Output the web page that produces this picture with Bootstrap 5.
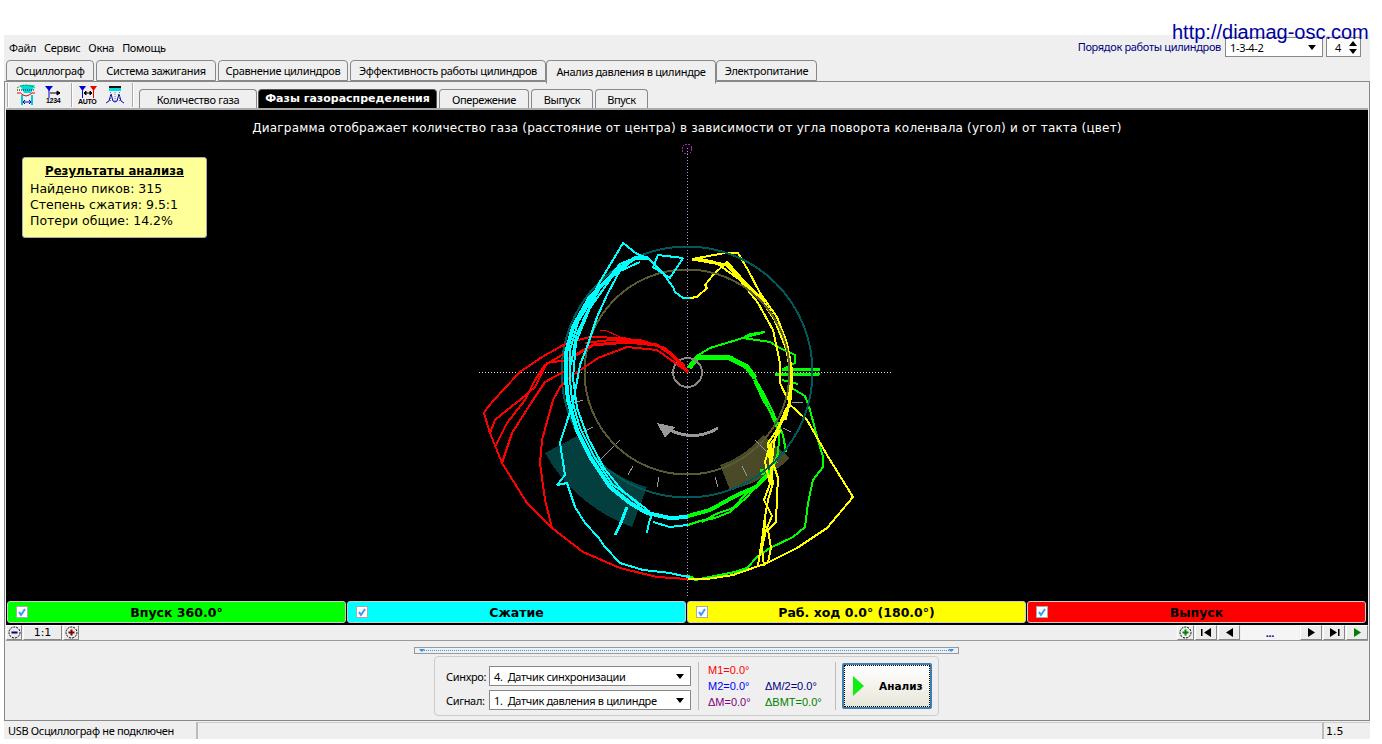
<!DOCTYPE html>
<html lang="ru">
<head>
<meta charset="UTF-8">
<title>Анализ давления в цилиндре</title>
<link rel="stylesheet" href="https://cdn.jsdelivr.net/npm/bootstrap@5.3.0/dist/css/bootstrap.min.css">
<style>
body { background: #fff; font-family: "Noto Sans", "Liberation Sans", sans-serif; font-size: 11px; line-height: 1; letter-spacing: -.33px; color: #000; overflow: hidden; }
.site-url { position: absolute; left: 1172px; top: 21px; font: 20px "Liberation Sans", sans-serif; letter-spacing: 0; color: #0000a0; z-index: 5; }
.app-win { width: 1366px; margin: 35px 0 0 4px; background: #efefef; }
.menu-row { height: 25px; padding: 2px 0 0 5px; }
.menu-items { gap: 8px; padding-top: 5px; }
.order-label { color: #000080; padding-top: 4px; margin-right: 4px; }
.combo { height: 20px; background: #fff; border: 1px solid #888; padding: 0 6px 0 4px; }
.combo-arrow { width: 0; height: 0; border: 4px solid transparent; border-top: 5px solid #000; border-bottom: 0; }
.combo-order { width: 98px; }
.spin-box { width: 35px; height: 20px; margin-left: 3px; margin-right: 9px; background: #fff; border: 1px solid #888; padding: 0 3px 0 8px; }
.spin-up, .spin-down { width: 0; height: 0; border: 4px solid transparent; }
.spin-up { border-bottom: 5px solid #000; border-top: 0; }
.spin-down { border-top: 5px solid #000; border-bottom: 0; margin-top: 3px; }
.top-tabs, .sub-tabs { border: 0; flex-wrap: nowrap; }
.top-tabs { height: 21px; padding-left: 2px; gap: 2px; position: relative; z-index: 2; }
.top-tabs .nav-link, .sub-tabs .nav-link { height: 21px; padding: 0; margin: 0; line-height: 20px; text-align: center; color: #000; background: #efefef; border: 1px solid #888; border-radius: 4px 4px 0 0; }
.top-tabs .nav-link.active { height: 24px; margin-top: -2px; line-height: 22px; background: #efefef; border-color: #888 #888 #efefef; }
.tw-1 { width: 88px; } .tw-2 { width: 120px; } .tw-3 { width: 130px; } .tw-4 { width: 196px; } .tw-5 { width: 170px; margin: 0 -2px !important; } .tw-6 { width: 101px; }
.main-box { height: 640px; border: 1px solid #888; }
.tool-row { height: 28px; border-bottom: 2px solid #aaa; padding-left: 1px; margin: 0 1px; }
.tool-sep { width: 1px; height: 24px; margin-top: 1px; background: #aaa; border-right: 1px solid #fff; box-sizing: content-box; }
.tool-icon { display: block; margin-top: 2px; }
.tg-5 { margin-left: 5px; } .tg-7 { margin-left: 7px; } .tg-8 { margin-left: 8px; } .tg-9 { margin-left: 9px; }
.sub-tabs { gap: 2px; height: 18px; margin-top: 7px; margin-left: 5px; }
.sub-tabs .nav-link { height: 19px; line-height: 19px; border-bottom: 0; }
.sub-tabs .nav-link.active { background: #000; color: #fff; font: bold 11px "DejaVu Sans", sans-serif; letter-spacing: 0; line-height: 18px; border-color: #555; }
.st-1 { width: 118px; } .st-2 { width: 179px; margin-left: -1px !important; } .st-3 { width: 90px; } .st-4 { width: 62px; } .st-5 { width: 53px; }
.chart-area { height: 491px; margin: 0 1px; background: #000; position: relative; overflow: hidden; }
.chart-svg { position: absolute; left: 0; top: 0; shape-rendering: crispEdges; }
.chart-title { position: absolute; left: 0; right: 0; top: 11px; margin: 0; text-align: center; color: #fff; font: 12px "DejaVu Sans", sans-serif; letter-spacing: .19px; }
.result-box { position: absolute; left: 16px; top: 47px; width: 185px; height: 81px; background: #ffff99; border: 1px solid #aaa; border-radius: 3px; padding: 5px 7px; font: 12.5px/16px "DejaVu Sans", sans-serif; letter-spacing: 0; }
.result-head { font-weight: bold; text-decoration: underline; text-align: center; font-size: 11.75px; margin-bottom: 2px; }
.legend-row { height: 24px; margin: 0 1px; background: #000; padding: 0 1px 2px; gap: 1px; }
.legend-item { width: 339px; height: 22px; border: 1px solid #ccc; border-radius: 3px; font: bold 12.5px "DejaVu Sans", sans-serif; letter-spacing: 0; position: relative; padding-top: 3px; text-align: center; }
.leg-green { background: #00ff00; } .leg-cyan { background: #00ffff; } .leg-yellow { background: #ffff00; } .leg-red { background: #ff0000; }
.leg-check { position: absolute; left: 8px; top: 4px; width: 12px; height: 12px; background: #fff; border: 1px solid #aaa; }
.scroll-row { height: 15px; margin: 0 1px; border-bottom: 1px solid #999; box-sizing: content-box; }
.win-btn { height: 15px; background: #ececec; border: 1px solid; border-color: #fff #888 #888 #fff; text-align: center; display: flex; align-items: center; justify-content: center; }
.wb-s { width: 16px; } .wb-p { width: 17px; } .wb-m { width: 22px; margin-left: 1px; } .wb-z { width: 39px; margin: 0 1px; font: 11px "DejaVu Sans", sans-serif; letter-spacing: 0; }
.wb-dots { width: 58px; margin-left: 1px; background: #f5f5f5; border: 0; color: #000080; font-weight: bold; }
.bottom-area { height: 79px; padding: 6px 1px 0 0; }
.split-bar { width: 545px; height: 7px; border: 1px solid #999; margin-bottom: 2px; position: relative; }
.split-line { border-top: 1px dotted #3399ee; margin: 2px 5px 0; }
.split-tri { position: absolute; top: 1px; width: 0; height: 0; border: 3px solid transparent; border-top: 3px solid #3399ee; border-bottom: 0; }
.tri-l { left: 4px; } .tri-r { right: 4px; }
.ctl-panel { width: 505px; height: 60px; border: 1px solid #ccc; border-radius: 4px; padding-left: 11px; }
.ctl-label { width: 43px; }
.ctl-combo { width: 202px; }
.ctl-rows { gap: 4px; margin-top: 4px; }
.ctl-sep { width: 1px; height: 48px; background: #bbb; margin: 0 9px 0 7px; }
.ctl-sep-b { margin: 0 6px 0 0; }
.m-grid { display: grid; grid-template-columns: 57px 70px; grid-auto-rows: 16px; font-family: "Liberation Sans", sans-serif; letter-spacing: 0; width: 127px; margin-top: 6px; }
.m-red { color: #ff0000; } .m-blue { color: #0000ff; } .m-purple { color: #800080; } .m-navy { color: #000080; } .m-green { color: #008000; }
.run-btn { width: 90px; height: 46px; padding: 0 0 0 9px; border-radius: 2px; border: 2px solid #3c7fb1; outline: 1px dotted #000; outline-offset: -3px; background: linear-gradient(#fff, #e8e6da); font: bold 10.5px "DejaVu Sans", sans-serif; letter-spacing: 0; color: #000; gap: 14px; }
.status-row { height: 17px; margin-top: 1px; }
.st-cell { padding: 3px 0 0 4px; height: 17px; }
.st-a { width: 189px; } .st-b { width: 1126px; margin-left: 3px; border-left: 2px solid #bbb; border-top: 1px solid #ccc; } .st-c { width: 48px; border-left: 2px solid #bbb; border-top: 1px solid #ccc; font-family: "DejaVu Sans", sans-serif; letter-spacing: 0; padding-left: 2px; }
</style>
</head>
<body>
<div class="site-url">http://diamag-osc.com</div>
<div class="app-win">
  <div class="menu-row d-flex justify-content-between">
    <div class="menu-items d-flex">
      <span>Файл</span><span>Сервис</span><span>Окна</span><span>Помощь</span>
    </div>
    <div class="d-flex">
      <span class="order-label">Порядок работы цилиндров</span>
      <div class="combo combo-order d-flex align-items-center justify-content-between"><span>1-3-4-2</span><span class="combo-arrow"></span></div>
      <div class="spin-box d-flex align-items-center justify-content-between"><span>4</span><span class="d-flex flex-column"><span class="spin-up"></span><span class="spin-down"></span></span></div>
    </div>
  </div>

  <ul class="nav nav-tabs top-tabs">
    <li class="nav-item"><a class="nav-link tw-1" href="#">Осциллограф</a></li>
    <li class="nav-item"><a class="nav-link tw-2" href="#">Система зажигания</a></li>
    <li class="nav-item"><a class="nav-link tw-3" href="#">Сравнение цилиндров</a></li>
    <li class="nav-item"><a class="nav-link tw-4" href="#">Эффективность работы цилиндров</a></li>
    <li class="nav-item"><a class="nav-link tw-5 active" href="#">Анализ давления в цилиндре</a></li>
    <li class="nav-item"><a class="nav-link tw-6" href="#">Электропитание</a></li>
  </ul>

  <div class="main-box">
    <div class="tool-row d-flex">
      <div class="tool-sep"></div>
      <svg class="tool-icon tg-7" width="20" height="23" viewBox="0 0 20 23">
        <path d="M4 1h15l-4 8H8z" fill="#00dddd"/>
        <path d="M1 4q9-6 18 0" fill="none" stroke="#009900" stroke-dasharray="2 1"/>
        <path d="M1 9q4-1 6 2 3 2 6 0 3-3 6-2" fill="none" stroke="#ee0000"/>
        <path d="M1 6h18" stroke="#000" stroke-dasharray="1 1"/>
        <path d="M6 11v10M16 11v10" stroke="#00cccc" stroke-width="2"/>
        <path d="M7 18h8M7 18l2-2M7 18l2 2M15 18l-2-2M15 18l-2 2" stroke="#0000cc" fill="none"/>
      </svg>
      <svg class="tool-icon tg-9" width="17" height="23" viewBox="0 0 17 23">
        <path d="M0 2h8L4 7z" fill="#0000dd"/>
        <path d="M4 5v9" stroke="#0000dd"/>
        <path d="M5 9h10M15 9l-3-2v4z" stroke="#000" fill="#000"/>
        <text x="1" y="19" font-size="7" font-weight="bold" font-family="Liberation Sans">1234</text>
      </svg>
      <div class="tool-sep tg-9"></div>
      <svg class="tool-icon tg-5" width="20" height="23" viewBox="0 0 20 23">
        <path d="M1 2h7L4.500 7z" fill="#0000dd"/>
        <path d="M12 2h7l-3.500 5z" fill="#ee0000"/>
        <path d="M4.500 5v9" stroke="#0000dd"/><path d="M15.500 5v9" stroke="#ee0000"/>
        <path d="M6 9h8M6 9l2-2v4zM14 9l-2-2v4z" stroke="#000" fill="#000"/>
        <text x="0" y="20" font-size="7" font-weight="bold" font-family="Liberation Sans">AUTO</text>
      </svg>
      <svg class="tool-icon tg-8" width="18" height="23" viewBox="0 0 18 23">
        <path d="M3 2h12v2H3z" fill="#111"/><path d="M3 4h12v3H3z" fill="#00dddd"/>
        <path d="M0 19l3-2 2-7 2 7 2 1 2-1 2-7 2 7 3 2" fill="none" stroke="#0000cc"/>
        <path d="M4.500 8v10M9 8v10M13.500 8v10" stroke="#777" stroke-dasharray="1 1"/>
      </svg>
      <div class="tool-sep tg-8"></div>
      <ul class="nav nav-tabs sub-tabs">
        <li class="nav-item"><a class="nav-link st-1" href="#">Количество газа</a></li>
        <li class="nav-item"><a class="nav-link st-2 active" href="#">Фазы газораспределения</a></li>
        <li class="nav-item"><a class="nav-link st-3" href="#">Опережение</a></li>
        <li class="nav-item"><a class="nav-link st-4" href="#">Выпуск</a></li>
        <li class="nav-item"><a class="nav-link st-5" href="#">Впуск</a></li>
      </ul>
    </div>

    <div class="chart-area">
      <svg class="chart-svg" width="1362" height="491" viewBox="6 110 1362 491" fill="none" stroke-linejoin="bevel">
        <!-- sectors -->
        <path d="M545 453A164 164 0 0 0 632 527L647 487A124 124 0 0 1 577 436Z" fill="#043f3f"/>
        <path d="M763 435A98 98 0 0 1 720 465L730 490A128 128 0 0 0 790 458Z" fill="#4a4a28"/>
        <!-- axes -->
        <path d="M479 372.500H893" stroke="#ddd" stroke-dasharray="1 2"/>
        <path d="M687.500 148V598" stroke="#aaa0dd" stroke-dasharray="1 2"/>
        <circle cx="687" cy="149" r="5" stroke="#aa22aa" stroke-dasharray="2 1"/>
        <!-- ticks -->
        <path d="M573 403L583 400M583 432L593 427M598 462L620 440M628 475L633 466M657 487L659 477M715 477L718 487M742 466L747 476M755 440L778 463M783 428L791 432M792 402L803 403" stroke="#999"/>
        <!-- green -->
        <g stroke="#00ff00" stroke-width="2">
          <polyline stroke-width="5" points="689,368 697,358 710,357 730,358 747,367 755,378"/>
          <polyline points="755,378 768,407 778,430"/>
          <polyline points="758,383 772,410 783,435 786,452"/>
          <polyline points="754,380 763,400 780,427 778,453 770,477"/>
          <polyline stroke-width="4" points="772,470 756,487 737,495 710,510 688,516"/>
          <polyline points="770,470 747,497 730,512 715,518 700,521 688,525"/>
          <polyline points="764,480 745,495 733,508 716,514 702,522"/>
          <polyline points="695,357 710,348 743,338 765,332 750,334 743,338 770,342 780,348 795,355 795,363 782,370"/>
          <polyline stroke-width="3" points="782,369 820,370"/>
          <polyline stroke-width="3" points="775,375 820,374"/>
          <polyline points="782,380 798,384"/>
          <polyline points="790,387 805,396 810,410 818,440 823,457 823,467 813,480 808,503 805,527 793,537 770,548 757,557 747,568 735,572 695,580 692,577 687,576"/>
          <polyline stroke-width="3" points="760,470 765,470 762,475"/>
        </g>
        <!-- yellow -->
        <g stroke="#ffff00" stroke-width="2">
          <polyline stroke-width="3" points="692,259 727,265 745,283 760,297 775,320 787,350 792,380 790,400 785,420"/>
          <polyline points="692,259 725,253 738,253 748,270 760,293 777,317 787,343 792,370 788,400"/>
          <polyline points="696,258 715,262 740,280 758,303 773,330 780,363 780,383 788,400"/>
          <polyline points="690,298 697,297 707,288 705,285 713,275 727,262 740,276 755,300"/>
          <polyline points="788,403 807,420 827,455 853,497 827,528 797,548 767,563 733,575 707,579 687,579"/>
          <polyline points="787,407 777,430 768,443 770,463 773,483 768,500 765,517 762,540 758,565"/>
          <polyline points="785,415 775,437 772,460 778,478 777,497 776,522 768,530 771,548 768,562"/>
          <polyline points="781,430 770,445 765,462 770,484 764,500 772,516 766,530 762,548 764,566"/>
          <polyline stroke-width="3" points="770,445 772,465 770,485"/>
          <polyline stroke-width="3" points="765,520 762,545"/>
        </g>
        <!-- rings -->
        <circle cx="687" cy="372" r="125.500" stroke="#005a5a" stroke-width="2"/>
        <circle cx="687" cy="372" r="102.500" stroke="#5a5a32" stroke-width="2"/>
        <circle cx="687.500" cy="372.500" r="14.500" stroke="#888" stroke-width="2"/>
        <!-- arrow -->
        <path d="M718 428Q695 442 670 430" stroke="#999" stroke-width="3"/>
        <path d="M657 423L675 427L665 438Z" fill="#999"/>
        <!-- red -->
        <g stroke="#ff0000" stroke-width="2">
          <polyline points="688,372 670,352 650,343 623,338 590,337 567,343 542,357 520,372 503,390 487,408 484,413 490,433 502,463 527,503 552,528 583,552 620,568 657,577 688,579"/>
          <polyline stroke-width="3" points="688,372 672,355 657,345 627,342 593,345 567,360"/>
          <polyline points="685,366 665,348 640,340 610,340 585,343"/>
          <polyline points="567,360 547,363 535,387 520,400 507,410 495,420 490,433"/>
          <polyline points="567,352 545,365 535,380 525,400 507,423 495,447"/>
          <polyline points="567,370 545,382 533,400 512,433 502,463"/>
          <polyline points="688,372 657,350 627,347 598,358 570,377 560,387 553,400 542,440 540,463 545,500 552,528"/>
          <polyline stroke-width="1" points="600,330 605,330 620,337"/>
        </g>
        <!-- cyan -->
        <g stroke="#00ffff" stroke-width="2">
          <polyline points="690,298 683,298 675,292 673,287 662,272 648,258 637,254 623,243 613,260 602,278 590,300"/>
          <polyline points="683,258 670,278 653,267 658,255 683,258"/>
          <polyline stroke-width="4" points="648,258 635,258 617,270 590,297 573,327 566,353 566,380 568,400 577,430 590,457 610,487 630,503 647,513 670,518 688,517"/>
          <polyline points="637,257 620,264 595,294 578,322 570,350 570,380 572,400 580,428 594,456 612,484 632,498 650,512"/>
          <polyline points="632,261 612,277 590,308 576,342 573,378 577,408 588,438 604,468 620,488 640,506"/>
          <polyline points="640,262 618,272 600,288 588,310 576,336 571,365"/>
          <polyline points="623,265 608,293 597,317 587,347 580,365 573,403 568,418 560,443 565,475 557,485 567,483 575,507 585,523 598,537 605,547 620,563 643,570 670,573 683,576 690,577"/>
          <polyline stroke-width="3" points="615,535 620,525 627,507"/>
          <polyline points="647,533 649,522 652,515"/>
          <polyline points="653,522 670,527 688,525"/>
        </g>
      </svg>
      <p class="chart-title">Диаграмма отображает количество газа (расстояние от центра) в зависимости от угла поворота коленвала (угол) и от такта (цвет)</p>
      <div class="result-box">
        <div class="result-head">Результаты анализа</div>
        <div>Найдено пиков: 315</div>
        <div>Степень сжатия: 9.5:1</div>
        <div>Потери общие: 14.2%</div>
      </div>
    </div>

    <div class="legend-row d-flex align-items-center">
      <div class="legend-item leg-green"><span class="leg-check"><svg width="10" height="10" viewBox="0 0 10 10" class="d-block"><path d="M2 5l2 3 4-6" fill="none" stroke="#3b99fc" stroke-width="2"/></svg></span>Впуск 360.0°</div>
      <div class="legend-item leg-cyan"><span class="leg-check"><svg width="10" height="10" viewBox="0 0 10 10" class="d-block"><path d="M2 5l2 3 4-6" fill="none" stroke="#3b99fc" stroke-width="2"/></svg></span>Сжатие</div>
      <div class="legend-item leg-yellow"><span class="leg-check"><svg width="10" height="10" viewBox="0 0 10 10" class="d-block"><path d="M2 5l2 3 4-6" fill="none" stroke="#3b99fc" stroke-width="2"/></svg></span>Раб. ход 0.0° (180.0°)</div>
      <div class="legend-item leg-red"><span class="leg-check"><svg width="10" height="10" viewBox="0 0 10 10" class="d-block"><path d="M2 5l2 3 4-6" fill="none" stroke="#3b99fc" stroke-width="2"/></svg></span>Выпуск</div>
    </div>

    <div class="scroll-row d-flex">
      <div class="win-btn wb-s"><svg width="13" height="13" viewBox="0 0 13 13"><circle cx="6.500" cy="6.500" r="5.500" fill="none" stroke="#000" stroke-dasharray="2 1"/><path d="M3.500 6.500h6" stroke="#000080" stroke-width="2"/></svg></div>
      <div class="win-btn wb-z">1:1</div>
      <div class="win-btn wb-s"><svg width="13" height="13" viewBox="0 0 13 13"><circle cx="6.500" cy="6.500" r="5.500" fill="none" stroke="#000" stroke-dasharray="2 1"/><path d="M3.500 6.500h6M6.500 3.500v6" stroke="#800000" stroke-width="2"/></svg></div>
      <div class="win-btn wb-p ms-auto"><svg width="13" height="13" viewBox="0 0 13 13"><circle cx="6.500" cy="6.500" r="5.500" fill="none" stroke="#000" stroke-dasharray="2 1"/><path d="M3.500 6.500h6M6.500 3.500v6" stroke="#008000" stroke-width="2"/></svg></div>
      <div class="win-btn wb-m"><svg width="11" height="9" viewBox="0 0 11 9"><path d="M0 1h1.500v7H0zM10 0v9L3 4.500z"/></svg></div>
      <div class="win-btn wb-m"><svg width="9" height="9" viewBox="0 0 9 9"><path d="M8 0v9L1 4.500z"/></svg></div>
      <div class="win-btn wb-dots">...</div>
      <div class="win-btn wb-m"><svg width="9" height="9" viewBox="0 0 9 9"><path d="M1 0v9l7-4.500z"/></svg></div>
      <div class="win-btn wb-m"><svg width="11" height="9" viewBox="0 0 11 9"><path d="M1 0v9l7-4.500zM9 1h1.500v7H9z"/></svg></div>
      <div class="win-btn wb-m"><svg width="9" height="9" viewBox="0 0 9 9"><path d="M1 0v9l7-4.500z" fill="#008000"/></svg></div>
    </div>

    <div class="bottom-area d-flex flex-column align-items-center">
      <div class="split-bar"><div class="split-line"></div><span class="split-tri tri-l"></span><span class="split-tri tri-r"></span></div>
      <div class="ctl-panel d-flex align-items-center">
        <div class="d-flex flex-column ctl-rows">
          <div class="d-flex align-items-center"><span class="ctl-label">Синхро:</span><div class="combo ctl-combo d-flex align-items-center justify-content-between"><span>4.&nbsp; Датчик синхронизации</span><span class="combo-arrow"></span></div></div>
          <div class="d-flex align-items-center"><span class="ctl-label">Сигнал:</span><div class="combo ctl-combo d-flex align-items-center justify-content-between"><span>1.&nbsp; Датчик давления в цилиндре</span><span class="combo-arrow"></span></div></div>
        </div>
        <div class="ctl-sep"></div>
        <div class="m-grid">
          <span class="m-red">M1=0.0°</span><span></span>
          <span class="m-blue">M2=0.0°</span><span class="m-navy">ΔM/2=0.0°</span>
          <span class="m-purple">ΔM=0.0°</span><span class="m-green">ΔBMT=0.0°</span>
        </div>
        <div class="ctl-sep ctl-sep-b"></div>
        <button class="btn run-btn d-flex align-items-center" type="button"><svg width="12" height="20" viewBox="0 0 12 20"><path d="M0 0v20l11-10z" fill="#11ee11"/></svg>Анализ</button>
      </div>
    </div>
  </div>

  <div class="status-row d-flex">
    <div class="st-cell st-a">USB Осциллограф не подключен</div>
    <div class="st-cell st-b"></div>
    <div class="st-cell st-c">1.5</div>
  </div>
</div>
<script src="https://cdn.jsdelivr.net/npm/bootstrap@5.3.0/dist/js/bootstrap.bundle.min.js"></script>
</body>
</html>
